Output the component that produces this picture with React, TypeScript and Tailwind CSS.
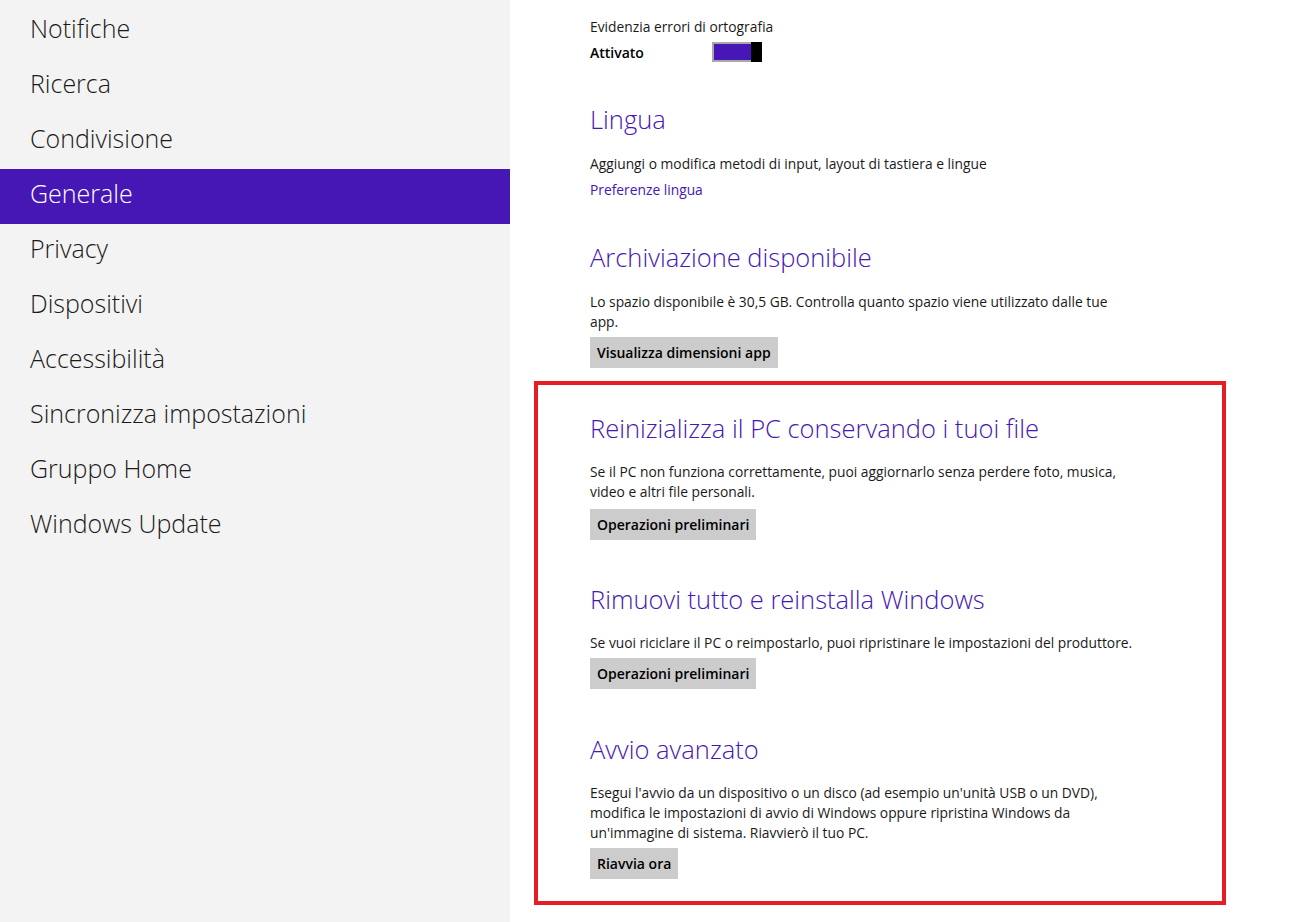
import React from 'react';

const menuItems = [
  'Notifiche',
  'Ricerca',
  'Condivisione',
  'Generale',
  'Privacy',
  'Dispositivi',
  'Accessibilità',
  'Sincronizza impostazioni',
  'Gruppo Home',
  'Windows Update',
];

const font = { fontFamily: '"Open Sans", "Noto Sans", sans-serif' };

const Heading: React.FC<{ children: React.ReactNode; className?: string }> = ({ children, className }) => (
  <h2 className={`text-[25.5px] leading-[32px] font-light text-[#4617b4] ${className ?? ''}`}>{children}</h2>
);

const GrayButton: React.FC<{ label: string; className?: string }> = ({ label, className }) => (
  <button className={`block h-[31px] px-[7px] bg-[#cccccc] text-[14px] font-semibold text-black ${className ?? ''}`}>
    {label}
  </button>
);

// Body text: each line kept on its own so wraps match the screenshot
const Lines: React.FC<{ lines: string[]; className?: string }> = ({ lines, className }) => (
  <div className={`text-[13.8px] leading-[20px] text-[#1a1a1a] ${className ?? ''}`}>
    {lines.map((l) => (
      <div key={l} className="whitespace-nowrap">{l}</div>
    ))}
  </div>
);

const App: React.FC = () => {
  return (
    <div className="flex w-[1300px] h-[922px] bg-white overflow-hidden" style={font}>
      {/* Sidebar */}
      <nav className="w-[510px] shrink-0 bg-[#f3f3f3] pt-[4px]">
        {menuItems.map((item) => {
          const active = item === 'Generale';
          return (
            <div
              key={item}
              className={`h-[55px] flex items-center pl-[30px] pb-[6px] text-[25px] font-light ${
                active ? 'bg-[#4617b4] text-white' : 'text-[#1a1a1a]'
              }`}
            >
              {item}
            </div>
          );
        })}
      </nav>

      {/* Content */}
      <main className="flex-1 pl-[24px]">
        <div className="pl-[56px]">
          <div className="mt-[17px] text-[13.8px] leading-[20px] text-[#1a1a1a]">Evidenzia errori di ortografia</div>
          <div className="mt-[5px] flex items-center h-[20px]">
            <span className="w-[122px] text-[14px] font-semibold text-black">Attivato</span>
            <span className="flex h-[20px] w-[50px] items-stretch border-2 border-[#a8a8a8] bg-[#4617b4]">
              <span className="flex-1" />
              <span className="w-[11px] bg-black -my-[2px] -mr-[2px]" />
            </span>
          </div>

          <Heading className="mt-[41px]">Lingua</Heading>
          <Lines className="mt-[19px]" lines={['Aggiungi o modifica metodi di input, layout di tastiera e lingue']} />
          <div className="mt-[6px] text-[13.8px] leading-[20px] text-[#4617b4]">Preferenze lingua</div>

          <Heading className="mt-[41px]">Archiviazione disponibile</Heading>
          <Lines
            className="mt-[19px]"
            lines={['Lo spazio disponibile è 30,5 GB. Controlla quanto spazio viene utilizzato dalle tue', 'app.']}
          />
          <GrayButton className="mt-[5px]" label="Visualizza dimensioni app" />
        </div>

        {/* Highlighted box */}
        <div className="mt-[13px] w-[692px] border-[4px] border-[#e81c24] pl-[52px] pt-[27px] pb-[22px]">
          <Heading>Reinizializza il PC conservando i tuoi file</Heading>
          <Lines
            className="mt-[18px]"
            lines={[
              'Se il PC non funziona correttamente, puoi aggiornarlo senza perdere foto, musica,',
              'video e altri file personali.',
            ]}
          />
          <GrayButton className="mt-[7px]" label="Operazioni preliminari" />

          <Heading className="mt-[43px]">Rimuovi tutto e reinstalla Windows</Heading>
          <Lines
            className="mt-[18px]"
            lines={['Se vuoi riciclare il PC o reimpostarlo, puoi ripristinare le impostazioni del produttore.']}
          />
          <GrayButton className="mt-[5px]" label="Operazioni preliminari" />

          <Heading className="mt-[44px]">Avvio avanzato</Heading>
          <Lines
            className="mt-[18px]"
            lines={[
              "Esegui l'avvio da un dispositivo o un disco (ad esempio un'unità USB o un DVD),",
              'modifica le impostazioni di avvio di Windows oppure ripristina Windows da',
              "un'immagine di sistema. Riavvierò il tuo PC.",
            ]}
          />
          <GrayButton className="mt-[5px]" label="Riavvia ora" />
        </div>
      </main>
    </div>
  );
};

export default App;
